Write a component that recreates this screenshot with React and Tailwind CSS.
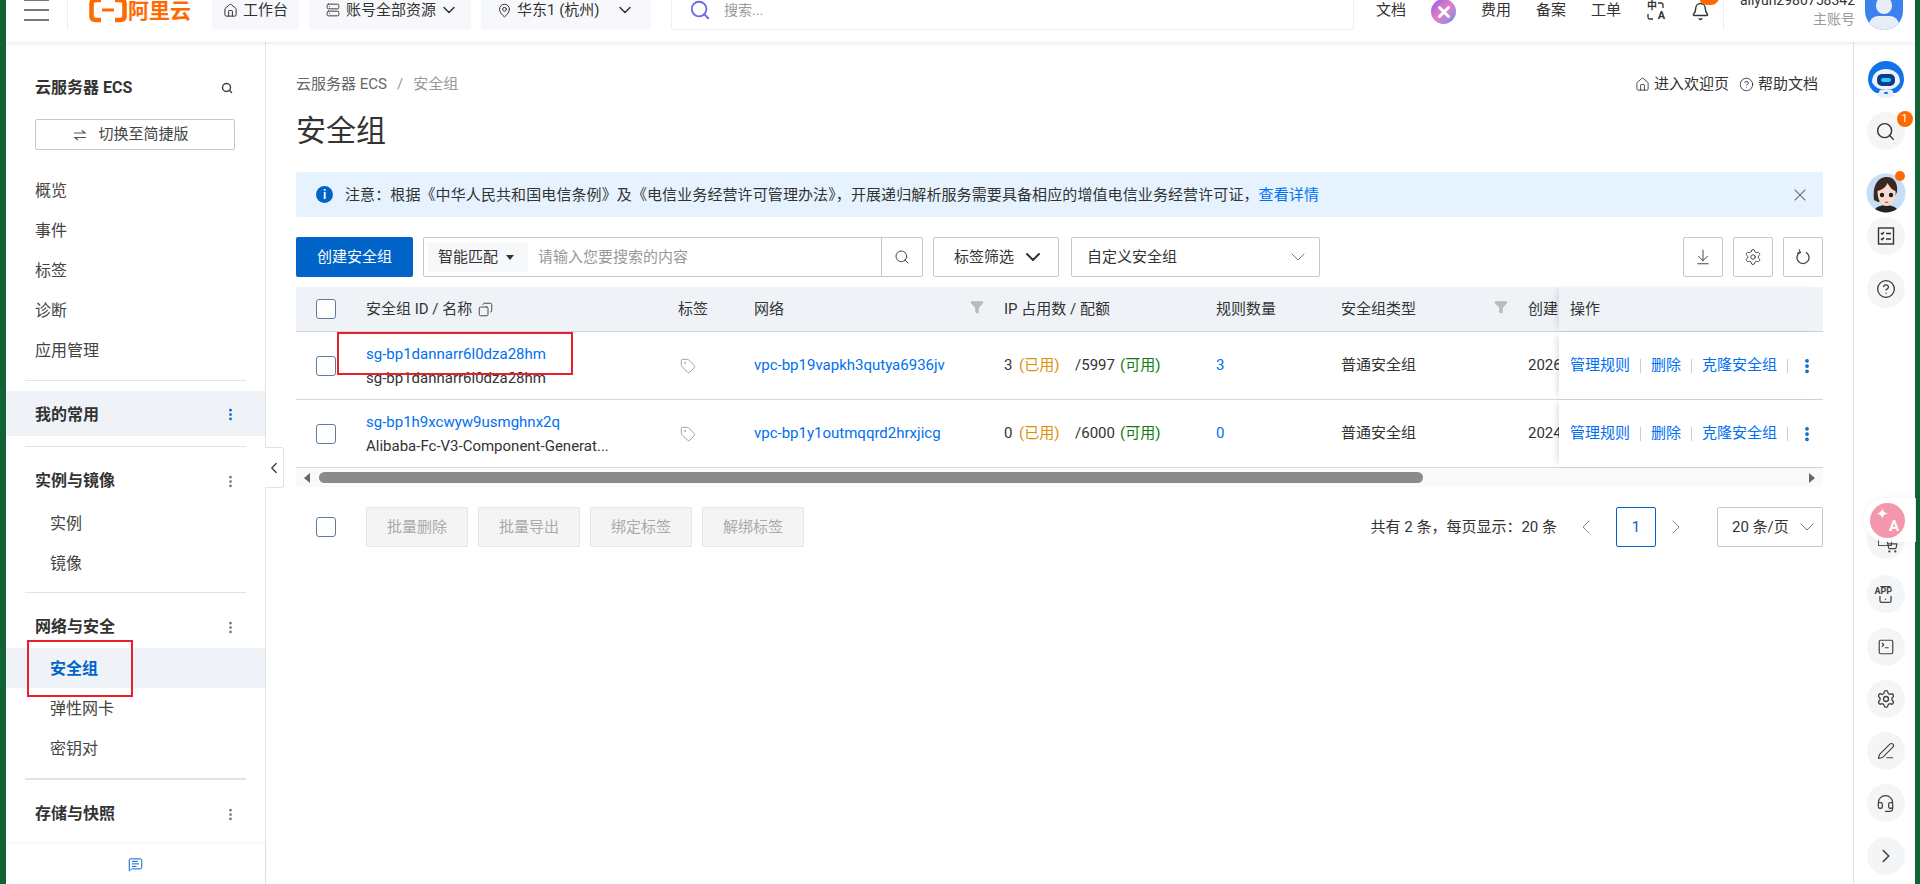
import {
  ArrowDownToLine,
  Bell,
  ChevronDown,
  ChevronLeft,
  ChevronRight,
  CircleHelp,
  EllipsisVertical,
  Funnel,
  House,
  MapPin,
  MessageSquareText,
  PenLine,
  Search,
  Server,
  Settings,
  ShoppingCart,
  SquareTerminal,
  Tag,
  Headset,
  Smartphone,
  Copy,
  X,
} from "lucide-react";

const font = "font-['Roboto','Noto_Sans_CJK_SC',sans-serif]";

function Checkbox() {
  return <span className="block w-[20px] h-[20px] rounded-[3px] border border-[#5f7d9c] bg-white" />;
}

function Logo() {
  return (
    <div className="ml-[21px] w-[104px] flex items-center text-[#ff6a00]">
      <svg width="38" height="40" viewBox="0 0 38 40" fill="none" stroke="#ff6a00" strokeWidth="4.5" className="shrink-0">
        <path d="M12 10H6.5Q2.5 10 2.5 14V26Q2.5 30 6.5 30H12" />
        <path d="M26 10H31.5Q35.5 10 35.5 14V26Q35.5 30 31.5 30H26" />
        <path d="M13 20H25" strokeWidth="3" />
      </svg>
      <span className="ml-px mt-[2px] text-[21px] font-bold leading-none whitespace-nowrap">阿里云</span>
    </div>
  );
}

function TranslateGlyph() {
  return (
    <div className="relative w-[18px] h-[20px] leading-none">
      <span className="absolute left-0 top-0 text-[10px] font-bold">中</span>
      <span className="absolute right-0 bottom-0 text-[11px] font-bold">A</span>
      <svg width="18" height="20" viewBox="0 0 18 20" fill="none" stroke="currentColor" strokeWidth="1.3" className="absolute inset-0">
        <path d="M11 2h3q2 0 2 2v3" />
        <path d="M6 18H3q-2 0-2-2v-3" />
      </svg>
    </div>
  );
}

function Header() {
  return (
    <header className="relative z-20 h-[42px] shrink-0 overflow-hidden bg-white shadow-[0_1px_5px_rgba(0,0,0,0.1)]">
      <div className="-mt-[10px] h-[40px] flex items-center text-[15px] text-[#333]">
        <div className="ml-[18px] w-[25px] flex flex-col gap-[8px]">
          <span className="h-[2px] bg-[#777]" />
          <span className="h-[2px] bg-[#777]" />
          <span className="h-[2px] bg-[#777]" />
        </div>
        <span className="ml-[18px] w-px h-[40px] bg-[#eee]" />
        <Logo />
        <div className="ml-[19px] w-[87px] h-[40px] bg-[#f7f8fb] rounded-[4px] flex items-center pl-[11px]">
          <House size={15} strokeWidth={1.6} />
          <span className="ml-[5px]">工作台</span>
        </div>
        <div className="ml-[10px] w-[162px] h-[40px] bg-[#f7f8fb] rounded-[4px] flex items-center pl-[17px]">
          <Server size={14} strokeWidth={1.6} />
          <span className="ml-[6px]">账号全部资源</span>
          <ChevronDown size={20} strokeWidth={1.8} className="ml-[3px]" />
        </div>
        <div className="ml-[10px] w-[170px] h-[40px] bg-[#f7f8fb] rounded-[4px] flex items-center pl-[16px]">
          <MapPin size={15} strokeWidth={1.6} />
          <span className="ml-[5px] whitespace-pre">华东1 (杭州) </span>
          <ChevronDown size={20} strokeWidth={1.8} className="ml-[12px]" />
        </div>
        <div className="ml-[20px] w-[683px] h-[40px] border border-[#eee] rounded-[2px] flex items-center pl-[17px]">
          <Search size={22} strokeWidth={2} className="text-[#6b6be8]" />
          <span className="ml-[13px] text-[#999] text-[14px]">搜索...</span>
        </div>
        <span className="ml-[22px]">文档</span>
        <span className="ml-[25px] w-[25px] h-[25px] rounded-full bg-gradient-to-br from-[#8a5ce6] via-[#e57cc4] to-[#4a8cf0] flex items-center justify-center text-white mt-[3px]">
          <X size={18} strokeWidth={4} />
        </span>
        <span className="ml-[25px]">费用</span>
        <span className="ml-[25px]">备案</span>
        <span className="ml-[25px]">工单</span>
        <div className="ml-[26px] mt-[1px]">
          <TranslateGlyph />
        </div>
        <div className="relative ml-[26px] mt-[2px]">
          <Bell size={19} strokeWidth={1.8} />
          <span className="absolute -top-[13px] left-[8px] w-[20px] h-[16px] rounded-full bg-[#ff6a00] text-white text-[11px] leading-[16px] text-center">38</span>
        </div>
        <span className="ml-[13px] w-px h-[40px] bg-[#eee]" />
        <div className="ml-[11px] w-[120px] flex flex-col items-end leading-[19px]">
          <span className="text-[14px] text-[#333]">aliyun2980758342</span>
          <span className="text-[14px] text-[#999]">主账号</span>
        </div>
        <div className="ml-[10px] w-[38px] h-[40px] overflow-hidden rounded-b-full bg-[#3b82ee] relative">
          <span className="absolute left-[11px] top-[7px] w-[16px] h-[17px] rounded-full bg-[#e8eef8]" />
          <span className="absolute left-[4px] top-[26px] w-[30px] h-[18px] rounded-full bg-[#e8eef8]" />
        </div>
      </div>
    </header>
  );
}

function MenuItem({ children }) {
  return <div className="h-10 pt-[2px] pl-[29px] flex items-center text-[16px] text-[#444]">{children}</div>;
}

function SubItem({ children, active }) {
  return (
    <div
      className={
        active
          ? "h-10 pt-[2px] pl-[44px] flex items-center text-[16px] font-bold text-[#0064c8] bg-[#eff3f8]"
          : "h-10 pt-[2px] pl-[44px] flex items-center text-[16px] text-[#444]"
      }
    >
      {children}
    </div>
  );
}

function GroupTitle({ children, mt }) {
  return (
    <div className={`h-10 pt-[2px] pl-[29px] pr-[27px] flex items-center justify-between text-[16px] font-bold text-[#333] ${mt}`}>
      {children}
      <EllipsisVertical size={15} strokeWidth={2.4} className="text-[#777]" />
    </div>
  );
}

function Divider({ className }) {
  return <div className={`mx-[19px] bg-[#e3e3e3] ${className}`} />;
}

function Sidebar() {
  return (
    <aside className="w-[260px] shrink-0 border-r border-[#e3e3e3] flex flex-col relative">
      <div className="mt-[34px] pl-[29px] pr-[32px] h-6 flex items-center justify-between">
        <span className="text-[16px] font-bold text-[#333]">云服务器 ECS</span>
        <Search size={12} strokeWidth={3} className="text-[#444]" />
      </div>
      <button className="mt-[19px] ml-[29px] w-[200px] h-[31px] border border-[#c8c8c8] rounded-[2px] flex items-center justify-center text-[15px] text-[#444] pr-[8px]">
        <svg width="14" height="14" viewBox="0 0 14 14" fill="none" stroke="#555" strokeWidth="1.2" className="mr-[11px]">
          <path d="M1 5H12L9 2.5" />
          <path d="M13 9.5H2L5 12" />
        </svg>
        切换至简捷版
      </button>
      <div className="mt-5">
        <MenuItem>概览</MenuItem>
        <MenuItem>事件</MenuItem>
        <MenuItem>标签</MenuItem>
        <MenuItem>诊断</MenuItem>
        <MenuItem>应用管理</MenuItem>
      </div>
      <Divider className="mt-[10px] h-px" />
      <div className="mt-[10px] h-[45px] pt-[2px] bg-[#eff3f8] pl-[29px] pr-[27px] flex items-center justify-between text-[16px] font-bold text-[#333]">
        我的常用
        <EllipsisVertical size={15} strokeWidth={2.4} className="text-[#0064c8]" />
      </div>
      <Divider className="mt-[10px] h-px" />
      <GroupTitle mt="mt-[13px]">实例与镜像</GroupTitle>
      <div className="mt-[3px]">
        <SubItem>实例</SubItem>
        <SubItem>镜像</SubItem>
      </div>
      <Divider className="mt-[9px] h-px" />
      <GroupTitle mt="mt-[13px]">网络与安全</GroupTitle>
      <div className="mt-[2px]">
        <SubItem active>安全组</SubItem>
        <SubItem>弹性网卡</SubItem>
        <SubItem>密钥对</SubItem>
      </div>
      <Divider className="mt-[10px] h-[2px]" />
      <GroupTitle mt="mt-[13px]">存储与快照</GroupTitle>
      <div className="mt-auto h-10 flex items-center justify-center shadow-[0_-2px_4px_rgba(0,0,0,0.04)] bg-white">
        <MessageSquareText size={15} strokeWidth={1.6} className="text-[#0064c8]" />
      </div>
      {/* red marker drawn over the menu entry */}
      <div className="absolute left-[21px] top-[598px] w-[106px] h-[57px] border-2 border-[#e5212b]" />
      <div className="absolute left-full top-[405px] w-[19px] h-[41px] bg-white border border-l-0 border-[#e3e3e3] rounded-r-[3px] flex items-center justify-center z-10">
        <ChevronLeft size={18} strokeWidth={1.6} className="text-[#333]" />
      </div>
    </aside>
  );
}

function ToolbarIcon({ children }) {
  return (
    <button className="w-10 h-10 border border-[#c8c8c8] rounded-[2px] flex items-center justify-center text-[#444]">
      {children}
    </button>
  );
}

function FilterIcon() {
  return <Funnel size={14} fill="#bbb" stroke="#bbb" className="-mt-[4px]" />;
}

function Ops() {
  return (
    <div className="relative z-10 w-[264px] h-full shrink-0 bg-white pl-[11px] flex items-center text-[#0070f0] shadow-[-5px_0_6px_-3px_rgba(0,0,0,0.12)]">
      <span>管理规则</span>
      <span className="mx-[10px] w-px h-[14px] bg-[#ccc]" />
      <span>删除</span>
      <span className="mx-[10px] w-px h-[14px] bg-[#ccc]" />
      <span>克隆安全组</span>
      <span className="mx-[10px] w-px h-[14px] bg-[#ccc]" />
      <EllipsisVertical size={18} strokeWidth={3} className="text-[#0064c8]" />
    </div>
  );
}

function Row({ id, name, vpc, used, quota, rules, date }) {
  return (
    <div className="h-[68px] border-b border-[#d3d7dc] flex items-center text-[15px] text-[#333]">
      <div className="w-[70px] shrink-0 pl-[20px]">
        <Checkbox />
      </div>
      <div className="w-[312px] shrink-0 leading-[24px]">
        <div className="text-[#0070f0]">{id}</div>
        <div>{name}</div>
      </div>
      <div className="w-[76px] shrink-0 pl-[2px]">
        <Tag size={16} strokeWidth={1.4} className="text-[#999]" />
      </div>
      <div className="w-[250px] shrink-0 text-[#0070f0]">{vpc}</div>
      <div className="w-[212px] shrink-0 flex items-center">
        <span className="w-[15px]">{used}</span>
        <span className="w-[56px] text-[#d9920a]">(已用)</span>
        <span className="w-[45px]">/{quota}</span>
        <span className="text-[#0f7d0f]">(可用)</span>
      </div>
      <div className="w-[125px] shrink-0 text-[#0070f0]">{rules}</div>
      <div className="w-[187px] shrink-0">普通安全组</div>
      <div className="w-[31px] shrink-0 overflow-hidden whitespace-nowrap">{date}</div>
      <Ops />
    </div>
  );
}

function SecurityTable() {
  return (
    <div className="relative mt-[10px]">
      <div className="h-[45px] bg-[#eff3f8] border-b border-[#cfd4da] flex items-center text-[15px] text-[#333]">
        <div className="w-[70px] shrink-0 pl-[20px]">
          <Checkbox />
        </div>
        <div className="w-[312px] shrink-0 flex items-center">
          安全组 ID / 名称
          <Copy size={15} strokeWidth={1.4} className="ml-[6px] -scale-x-100" />
        </div>
        <div className="w-[76px] shrink-0">标签</div>
        <div className="w-[250px] shrink-0 pr-[20px] flex items-center justify-between">
          网络
          <FilterIcon />
        </div>
        <div className="w-[212px] shrink-0">IP 占用数 / 配额</div>
        <div className="w-[125px] shrink-0">规则数量</div>
        <div className="w-[187px] shrink-0 pr-[20px] flex items-center justify-between">
          安全组类型
          <FilterIcon />
        </div>
        <div className="w-[31px] shrink-0 overflow-hidden whitespace-nowrap">创建</div>
        <div className="relative z-10 w-[264px] h-full shrink-0 bg-[#eff3f8] pl-[11px] flex items-center shadow-[-5px_0_6px_-3px_rgba(0,0,0,0.12)]">
          操作
        </div>
      </div>
      <Row
        id="sg-bp1dannarr6l0dza28hm"
        name="sg-bp1dannarr6l0dza28hm"
        vpc="vpc-bp19vapkh3qutya6936jv"
        used="3"
        quota="5997"
        rules="3"
        date="2026"
      />
      <Row
        id="sg-bp1h9xcwyw9usmghnx2q"
        name="Alibaba-Fc-V3-Component-Generat..."
        vpc="vpc-bp1y1outmqqrd2hrxjicg"
        used="0"
        quota="6000"
        rules="0"
        date="2024"
      />
      <div className="h-[19px] bg-[#fafafa] flex items-center">
        <span className="ml-[8px] w-0 h-0 border-y-[5px] border-y-transparent border-r-[6px] border-r-[#666]" />
        <span className="ml-[9px] w-[1104px] h-[11px] rounded-full bg-[#8a8a8a]" />
        <span className="ml-auto mr-[8px] w-0 h-0 border-y-[5px] border-y-transparent border-l-[6px] border-l-[#666]" />
      </div>
      {/* red marker drawn over the first id */}
      <div className="absolute left-[41px] top-[45px] w-[236px] h-[43px] border-2 border-[#e5212b] z-20" />
    </div>
  );
}

function BulkButton({ children }) {
  return (
    <button className="w-[102px] h-[40px] bg-[#f4f4f4] border border-[#e6e6e6] rounded-[2px] text-[15px] text-[#aaa]">
      {children}
    </button>
  );
}

function Main() {
  return (
    <main className="flex-1 min-w-0 px-[30px] pt-[32px]">
      <div className="h-5 flex items-center justify-between text-[15px]">
        <div className="flex items-center text-[#666]">
          云服务器 ECS
          <span className="mx-[10px] text-[#999]">/</span>
          <span className="text-[#999]">安全组</span>
        </div>
        <div className="flex items-center mr-[5px] text-[#333]">
          <House size={15} strokeWidth={1.4} />
          <span className="ml-[4px]">进入欢迎页</span>
          <CircleHelp size={15} strokeWidth={1.4} className="ml-[10px]" />
          <span className="ml-[4px]">帮助文档</span>
        </div>
      </div>
      <h1 className="mt-[17px] h-10 flex items-center text-[30px] text-[#333] leading-none font-normal">安全组</h1>
      <div className="mt-[21px] h-[45px] bg-[#e6f3ff] rounded-[2px] flex items-center text-[15px] text-[#333] pl-[20px] pr-[13px]">
        <span className="w-[17px] h-[17px] rounded-full bg-[#0064c8] text-white flex items-center justify-center text-[12px] font-bold leading-none">
          i
        </span>
        <span className="ml-[12px] mt-[2px] tracking-[0.1px]">
          注意：根据《中华人民共和国电信条例》及《电信业务经营许可管理办法》，开展递归解析服务需要具备相应的增值电信业务经营许可证，
          <span className="text-[#0070f0]">查看详情</span>
        </span>
        <X size={20} strokeWidth={1.3} className="ml-auto text-[#777]" />
      </div>
      <div className="mt-5 h-10 flex items-center text-[15px]">
        <button className="w-[117px] h-10 bg-[#0064c8] rounded-[2px] text-white">创建安全组</button>
        <div className="ml-[10px] w-[500px] h-10 border border-[#c8c8c8] rounded-[2px] flex items-center pl-[4px]">
          <div className="w-[100px] h-[30px] bg-[#f7f8fa] flex items-center pl-[10px] text-[#333]">
            智能匹配
            <span className="ml-[8px] w-0 h-0 border-x-[4px] border-x-transparent border-t-[5px] border-t-[#333]" />
          </div>
          <span className="ml-[10px] flex-1 text-[#999]">请输入您要搜索的内容</span>
          <span className="w-[41px] h-full border-l border-[#c8c8c8] flex items-center justify-center text-[#444]">
            <Search size={16} strokeWidth={1.5} />
          </span>
        </div>
        <div className="ml-[10px] w-[126px] h-10 border border-[#c8c8c8] rounded-[2px] flex items-center pl-[20px] text-[#333]">
          标签筛选
          <ChevronDown size={24} strokeWidth={2} className="ml-[7px]" />
        </div>
        <div className="ml-[12px] w-[249px] h-10 border border-[#c8c8c8] rounded-[2px] flex items-center pl-[15px] pr-[9px] text-[#333]">
          自定义安全组
          <ChevronDown size={24} strokeWidth={1} className="ml-auto text-[#777]" />
        </div>
        <div className="ml-auto flex gap-[10px]">
          <ToolbarIcon>
            <ArrowDownToLine size={18} strokeWidth={1.3} />
          </ToolbarIcon>
          <ToolbarIcon>
            <Settings size={18} strokeWidth={1.3} />
          </ToolbarIcon>
          <ToolbarIcon>
            <svg width="18" height="18" viewBox="0 0 18 18" fill="none" stroke="currentColor" strokeWidth="1.3">
              <path d="M6 4.4A6 6 0 1 0 12 4.4" />
              <path d="M5 1.5L6.4 4.6L3.2 5.2" />
            </svg>
          </ToolbarIcon>
        </div>
      </div>
      <SecurityTable />
      <div className="mt-5 h-10 flex items-center text-[15px] text-[#333]">
        <div className="ml-[20px] w-[50px]">
          <Checkbox />
        </div>
        <div className="flex gap-[10px]">
          <BulkButton>批量删除</BulkButton>
          <BulkButton>批量导出</BulkButton>
          <BulkButton>绑定标签</BulkButton>
          <BulkButton>解绑标签</BulkButton>
        </div>
        <span className="ml-auto">共有 2 条，每页显示：20 条</span>
        <ChevronLeft size={24} strokeWidth={1} className="ml-[17px] text-[#888]" />
        <span className="ml-[18px] w-10 h-10 border border-[#0064c8] rounded-[2px] flex items-center justify-center text-[#0064c8]">1</span>
        <ChevronRight size={24} strokeWidth={1} className="ml-[8px] text-[#888]" />
        <div className="ml-[29px] w-[106px] h-10 border border-[#c8c8c8] rounded-[2px] flex items-center pl-[14px] pr-[3px]">
          20 条/页
          <ChevronDown size={24} strokeWidth={1} className="ml-auto text-[#777]" />
        </div>
      </div>
    </main>
  );
}

function RailButton({ children, className }) {
  return (
    <div className={`relative w-[38px] h-[38px] shrink-0 rounded-full bg-[#f4f5f7] flex items-center justify-center text-[#444] ${className}`}>
      {children}
    </div>
  );
}

function Bot() {
  return (
    <svg width="38" height="38" viewBox="0 0 38 38" className="shrink-0">
      <path d="M19 0a18 18 0 0 1 18 18c0 6-3 11-8 14H9C4 29 1 24 1 18A18 18 0 0 1 19 0z" fill="#1273e6" />
      <path d="M5 21c0-8 6-13 14-13s14 5 14 13c-2 5-8 8-14 8S7 26 5 21z" fill="#eef3fb" />
      <rect x="10" y="13" width="18" height="12" rx="5" fill="#123a8c" />
      <rect x="14" y="17" width="10" height="4" rx="2" fill="#2bd0f5" />
      <path d="M13 29h12l3 6q-9 4-18 0z" fill="#e9eff8" />
      <rect x="17" y="31" width="4" height="2" rx="1" fill="#1273e6" />
    </svg>
  );
}

function Girl() {
  return (
    <svg width="42" height="42" viewBox="0 0 42 42">
      <circle cx="21" cy="21" r="21" fill="#fff" />
      <circle cx="21" cy="21" r="19.5" fill="#c6def8" />
      <path d="M10 37c3-3 7-4 11-4s8 1 11 4a19.5 19.5 0 0 1-22 0z" fill="#222" />
      <path d="M9 28C7 12 14 5 22 5c7 0 11 6 10 15l-3 6-16 4z" fill="#3a2820" />
      <path d="M12.5 19c4-1 8-3 10-8 2 4 5 7 8 8 1 7-3 15-9 15s-9-7-9-15z" fill="#f7dace" />
      <circle cx="17" cy="23" r="2.2" fill="#241a18" />
      <circle cx="26" cy="23" r="2.2" fill="#241a18" />
      <path d="M20 30q1.6 1 3.2 0" stroke="#c55" strokeWidth="1.2" fill="none" />
    </svg>
  );
}

function Rail() {
  return (
    <aside className="relative w-[62px] shrink-0 border-l border-[#e3e3e3] flex flex-col items-center pt-[19px] pl-[2px]">
      <Bot />
      <RailButton className="mt-[13px]">
        <Search size={21} strokeWidth={1.6} className="text-[#333]" />
        <span className="absolute -top-[1px] -right-[8px] w-[16px] h-[16px] rounded-full bg-[#ff6a00] text-white text-[11px] flex items-center justify-center">
          1
        </span>
      </RailButton>
      <div className="relative mt-[22px] h-[42px]">
        <Girl />
        <span className="absolute -top-[1px] right-[2px] w-[10px] h-[10px] rounded-full bg-[#ff6a00]" />
      </div>
      <RailButton className="mt-[3px]">
        <svg width="18" height="18" viewBox="0 0 18 18" fill="none" stroke="#333" strokeWidth="1.4">
          <rect x="1.5" y="1" width="15" height="16" />
          <path d="M4 6l1.2 1.2L7 5M4 11.5l1.2 1.2L7 10.5M9 6.5h5M9 12h5" />
        </svg>
      </RailButton>
      <RailButton className="mt-[15px]">
        <CircleHelp size={20} strokeWidth={1.5} className="text-[#333]" />
      </RailButton>
      <RailButton className="mt-[213px]">
        <span className="absolute left-[11px] top-[11px] w-[14px] h-[14px] border border-[#555]" />
        <ShoppingCart size={13} strokeWidth={2.2} className="mt-[12px] ml-[12px] relative" />
      </RailButton>
      <RailButton className="mt-[16px]">
        <Smartphone size={19} strokeWidth={1.6} />
        <span className="absolute left-[8px] top-[12px] bg-[#f4f5f7] text-[9px] font-bold leading-none">APP</span>
      </RailButton>
      <RailButton className="mt-[15px]">
        <SquareTerminal size={18} strokeWidth={1.6} />
      </RailButton>
      <RailButton className="mt-[14px]">
        <Settings size={20} strokeWidth={1.6} />
      </RailButton>
      <RailButton className="mt-[14px]">
        <PenLine size={18} strokeWidth={1.6} />
      </RailButton>
      <RailButton className="mt-[14px]">
        <Headset size={19} strokeWidth={1.6} />
      </RailButton>
      <RailButton className="mt-[15px]">
        <ChevronRight size={22} strokeWidth={1.8} />
      </RailButton>
      {/* floating translate bubble */}
      <div className="absolute left-[10px] top-[456px] w-[52px] h-[44px] rounded-l-full bg-white/90 shadow-[0_0_6px_rgba(0,0,0,0.06)] flex items-center pl-[6px]">
        <span className="relative w-[35px] h-[35px] rounded-full bg-[#f497ae] text-white leading-none">
          <span className="absolute left-[6px] top-[4px] text-[15px]">✦</span>
          <span className="absolute right-[6px] bottom-[4px] text-[15px] font-bold">A</span>
        </span>
      </div>
    </aside>
  );
}

export default function App() {
  return (
    <div className={`h-screen flex overflow-hidden bg-white ${font}`}>
      <div className="w-[6px] shrink-0 bg-[#0f6334]" />
      <div className="flex-1 min-w-0 flex flex-col">
        <Header />
        <div className="flex-1 min-h-0 flex">
          <Sidebar />
          <Main />
          <Rail />
        </div>
      </div>
      <div className="w-[5px] shrink-0 bg-[#0f6334]" />
    </div>
  );
}
